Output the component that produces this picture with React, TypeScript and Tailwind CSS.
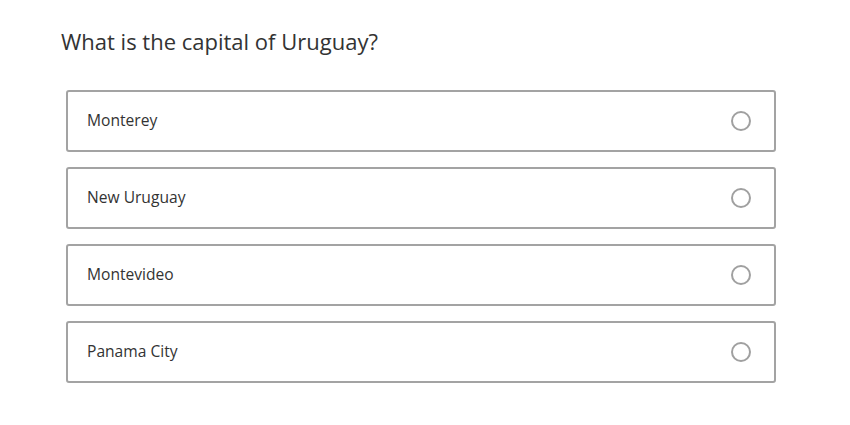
const options = ["Monterey", "New Uruguay", "Montevideo", "Panama City"];

export default function App() {
  return (
    <div className="min-h-screen bg-white font-['Open_Sans',sans-serif] text-[#333]">
      <div className="pl-[61px] pt-[26px]">
        <h1 className="text-[22px] leading-[30px] text-[#333]">What is the capital of Uruguay?</h1>
      </div>
      <div className="mt-[34px] ml-[66px] w-[710px] flex flex-col gap-[15px]">
        {options.map((o) => (
          <div
            key={o}
            className="h-[62px] flex items-center justify-between border-2 border-[#a3a3a3] rounded-[3px] pl-[19px] pr-[23px]"
          >
            <span className="text-[15.6px] text-[#333]">{o}</span>
            <span className="w-[20px] h-[20px] rounded-full border-2 border-[#a0a0a0]" />
          </div>
        ))}
      </div>
    </div>
  );
}
